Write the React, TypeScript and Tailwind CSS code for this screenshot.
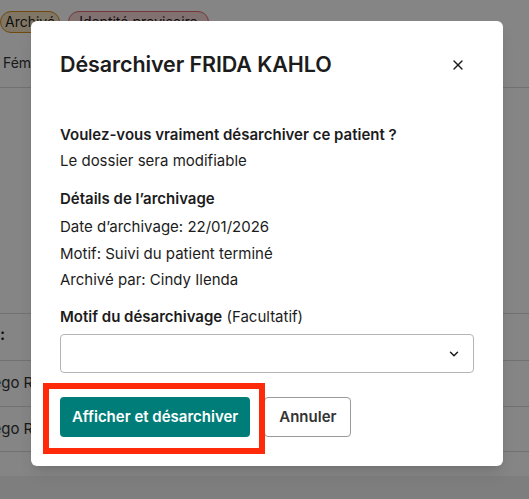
import { ChevronDown, X } from 'lucide-react';

export default function App() {
  return (
    <div className="relative h-[499px] w-[529px] overflow-hidden bg-white font-['Inter',sans-serif] text-[#1c1c1c]">
      {/* Page behind the modal */}
      <div className="flex gap-2 pt-[11px]">
        <span className="rounded-full border border-[#d98c1a] bg-[#f6e3c2] px-[4px] text-[14px] leading-[20px]">Archivé</span>
        <span className="rounded-full border border-[#e06a6a] bg-[#f9d9d9] px-[10px] text-[14px] leading-[20px]">Identité provisoire</span>
      </div>
      <div className="mt-[19px] pl-[3px] text-[14px] text-[#333]">Féminin</div>
      <div className="mt-[14px] border-b border-[#d9d9d9]" />
      <div className="mt-[225px] border-b border-[#d9d9d9]" />
      <div className="pt-[8px] pb-[14px] text-[16px] font-semibold">:</div>
      <div className="border-b border-[#d9d9d9]" />
      <div className="-ml-[22px] flex h-[45px] items-center text-[15px] text-[#333]">Diego Rivera</div>
      <div className="border-b border-[#d9d9d9]" />
      <div className="-ml-[22px] flex h-[44px] items-center text-[15px] text-[#333]">Diego Rivera</div>
      <div className="border-b border-[#d9d9d9]" />
      <div className="mt-[24px] h-[40px] bg-[#f2f2f2]" />

      {/* Overlay */}
      <div className="absolute inset-0 bg-black/[0.48]" />

      {/* Modal */}
      <div className="absolute left-[31px] top-[21px] w-[472px] rounded-[6px] bg-white px-[29px] pb-[29px] pt-[29px] shadow-lg">
        <div className="flex items-center justify-between">
          <h2 className="text-[21.5px] font-semibold leading-[28px] tracking-[-0.1px]">Désarchiver FRIDA KAHLO</h2>
          <X className="mr-[8px] mt-[2px] h-[16px] w-[16px]" strokeWidth={2} />
        </div>

        <div className="mt-[47px] text-[15px] leading-[20px]">
          <p className="font-semibold">Voulez-vous vraiment désarchiver ce patient ?</p>
          <p className="mt-[6px]">Le dossier sera modifiable</p>
          <p className="mt-[18px] font-semibold">Détails de l’archivage</p>
          <p className="mt-[8px]">Date d’archivage: 22/01/2026</p>
          <p className="mt-[7px]">Motif: Suivi du patient terminé</p>
          <p className="mt-[6px]">Archivé par: Cindy Ilenda</p>

          <p className="mt-[17px]">
            <span className="font-semibold">Motif du désarchivage</span> (Facultatif)
          </p>
          <div className="mt-[7px] flex h-[39px] items-center justify-end rounded-[4px] border border-[#b5b5b5] pr-[12px]">
            <ChevronDown className="h-[14px] w-[14px]" strokeWidth={2.5} />
          </div>

          <div className="mt-[24px] flex gap-[14px]">
            <button className="h-[40px] rounded-[4px] bg-[#007d79] px-[12px] font-semibold text-white">
              Afficher et désarchiver
            </button>
            <button className="h-[40px] rounded-[4px] border border-[#9a9a9a] px-[14px] font-semibold text-[#333]">
              Annuler
            </button>
          </div>
        </div>
      </div>

      {/* Red annotation */}
      <div className="absolute left-[43px] top-[383px] h-[71px] w-[222px] border-[6px] border-[#ff2a0a]" />
    </div>
  );
}
